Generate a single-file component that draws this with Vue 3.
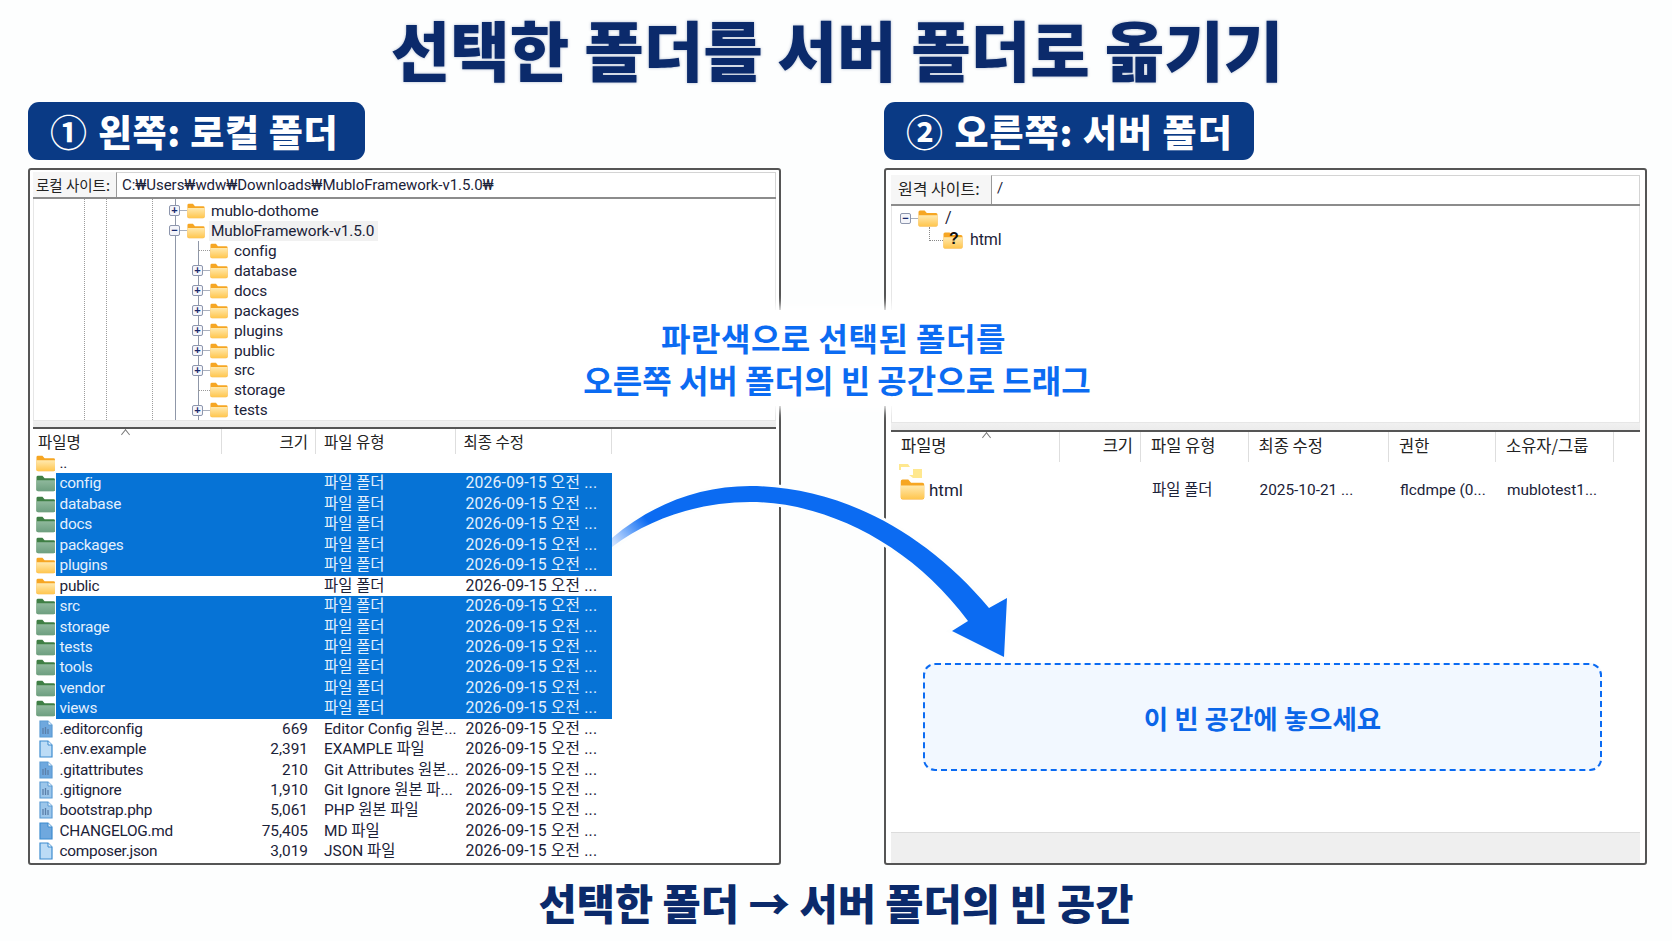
<template>
  <div class="page">
    <svg class="defs" width="0" height="0" aria-hidden="true">
      <defs>
        <linearGradient id="folder-face" x1="0" y1="0" x2="0" y2="1">
          <stop offset="0" stop-color="#ffe9ae" />
          <stop offset="1" stop-color="#ffc64f" />
        </linearGradient>
        <linearGradient id="folder-green-face" x1="0" y1="0" x2="0" y2="1">
          <stop offset="0" stop-color="#8fb89c" />
          <stop offset="1" stop-color="#6e9f80" />
        </linearGradient>
        <linearGradient id="arrow-fill" gradientUnits="userSpaceOnUse" x1="0" y1="62" x2="32" y2="36">
          <stop offset="0" stop-color="#cfe2ff" />
          <stop offset="1" stop-color="#0b6bf2" />
        </linearGradient>
        <symbol id="folder" viewBox="0 0 20 17">
          <path d="M0.5 15V2a1.5 1.5 0 0 1 1.5-1.5h4.6l2.2 2.6H18a1.5 1.5 0 0 1 1.5 1.5V15a1.5 1.5 0 0 1-1.5 1.5H2A1.5 1.5 0 0 1 .5 15Z" fill="#f6a623" />
          <path d="M0.5 5.2h19V15a1.2 1.2 0 0 1-1.2 1.2H1.7A1.2 1.2 0 0 1 .5 15Z" fill="url(#folder-face)" />
        </symbol>
        <symbol id="folder-green" viewBox="0 0 20 17">
          <path d="M0.5 15V2a1.5 1.5 0 0 1 1.5-1.5h4.6l2.2 2.6H18a1.5 1.5 0 0 1 1.5 1.5V15a1.5 1.5 0 0 1-1.5 1.5H2A1.5 1.5 0 0 1 .5 15Z" fill="#3f7f45" />
          <path d="M0.5 5.2h19V15a1.2 1.2 0 0 1-1.2 1.2H1.7A1.2 1.2 0 0 1 .5 15Z" fill="url(#folder-green-face)" />
        </symbol>
        <symbol id="doc" viewBox="0 0 14 18">
          <path d="M1 1h8l4 4v12H1Z" fill="currentColor" stroke="#3d8ccf" stroke-width="1.2" />
          <path d="M9 1v4h4" fill="#eaf4fd" stroke="#3d8ccf" stroke-width="1" />
        </symbol>
        <symbol id="doc-lines" viewBox="0 0 14 18">
          <path d="M1 1h8l4 4v12H1Z" fill="currentColor" stroke="#5a9bd4" stroke-width="1.2" />
          <path d="M9 1v4h4" fill="#eaf4fd" stroke="#5a9bd4" stroke-width="1" />
          <path d="M4 8v6M6.5 7v7M9 9v5" stroke="#5b7fa8" stroke-width="1.3" fill="none" />
        </symbol>
      </defs>
    </svg>

    <h1 class="title">선택한 폴더를 서버 폴더로 옮기기</h1>

    <div class="columns">
      <div class="badge badge-left"><span class="num">①</span> 왼쪽: 로컬 폴더</div>
      <div class="badge badge-right"><span class="num">②</span> 오른쪽: 서버 폴더</div>

      <!-- 왼쪽 패널 -->
      <section class="panel panel-left">
        <div class="site-bar">
          <span class="site-label">로컬 사이트:</span>
          <div class="site-input">C:₩Users₩wdw₩Downloads₩MubloFramework-v1.5.0₩</div>
        </div>
        <div class="tree tree-left">
          <div v-for="node in localTree" :key="node.name" class="tree-row" :class="'lvl-' + node.level">
            <span class="slot">
              <span v-if="node.mark" class="expander">{{ node.mark }}</span>
              <span v-if="node.mark" class="dash"></span>
              <span v-else class="dash-only"></span>
            </span>
            <svg class="tree-folder"><use href="#folder" /></svg>
            <span class="tree-name" :class="{ current: node.current }">{{ node.name }}</span>
          </div>
          <div class="tree-row lvl-2 clipped">
            <span class="slot"></span>
            <svg class="tree-folder"><use href="#folder" /></svg>
          </div>
        </div>
        <div class="split"></div>
        <div class="list-head cols-left">
          <span class="caret caret-left"></span>
          <span>파일명</span>
          <span class="right">크기</span>
          <span>파일 유형</span>
          <span>최종 수정</span>
        </div>
        <div class="rows">
          <div v-for="row in localRows" :key="row.name" class="row">
            <svg class="row-icon" :class="row.icon"><use :href="'#' + iconOf(row)" /></svg>
            <div class="row-body cols-body" :class="{ selected: row.selected }">
              <span class="cell-name">{{ row.name }}</span>
              <span class="right">{{ row.size }}</span>
              <span>{{ row.type }}</span>
              <span class="cell-date">{{ row.date }}</span>
            </div>
          </div>
        </div>
      </section>

      <!-- 오른쪽 패널 -->
      <section class="panel panel-right">
        <div class="site-bar">
          <span class="site-label">원격 사이트:</span>
          <div class="site-input">/</div>
        </div>
        <div class="tree tree-right">
          <div class="tree-row root-row">
            <span class="slot">
              <span class="expander">−</span>
              <span class="dash"></span>
            </span>
            <svg class="tree-folder"><use href="#folder" /></svg>
            <span class="tree-name">/</span>
          </div>
          <div class="tree-row html-row">
            <span class="elbow"></span>
            <span class="unknown">
              <svg class="tree-folder"><use href="#folder" /></svg>
              <b>?</b>
            </span>
            <span class="tree-name">html</span>
          </div>
        </div>
        <div class="split"></div>
        <div class="list-head cols-right">
          <span class="caret caret-right"></span>
          <span>파일명</span>
          <span class="right">크기</span>
          <span>파일 유형</span>
          <span>최종 수정</span>
          <span>권한</span>
          <span>소유자/그룹</span>
        </div>
        <div class="remote-rows">
          <svg class="ghost" viewBox="0 0 24 14">
            <path d="M0 0h9l2 3h-9v3H0Z" fill="#ffe88f" />
            <path d="M14 5h9v9h-9l-4-3h4Z" fill="#ffe88f" />
          </svg>
          <div class="remote-row cols-right">
            <span class="remote-name">
              <svg class="remote-folder"><use href="#folder" /></svg>
              html
            </span>
            <span></span>
            <span>파일 폴더</span>
            <span>2025-10-21 ...</span>
            <span>flcdmpe (0...</span>
            <span>mublotest1...</span>
          </div>
        </div>
        <div class="status"></div>
      </section>
    </div>

    <p class="footer">선택한 폴더 → 서버 폴더의 빈 공간</p>

    <div class="note">
      <span class="note-first">파란색으로 선택된 폴더를</span><br />오른쪽 서버 폴더의 빈 공간으로 드래그
    </div>

    <div class="drop-zone">이 빈 공간에 놓으세요</div>

    <svg class="arrow" width="400" height="180" viewBox="0 0 400 180">
      <path class="arrow-halo" :d="arrowPath" />
      <path class="arrow-shape" :d="arrowPath" fill="url(#arrow-fill)" />
    </svg>
  </div>
</template>

<script setup>
const date = '2026-09-15 오전 ...'
const folderType = '파일 폴더'

const localTree = [
  { name: 'mublo-dothome', level: 1, mark: '+' },
  { name: 'MubloFramework-v1.5.0', level: 1, mark: '−', current: true },
  { name: 'config', level: 2 },
  { name: 'database', level: 2, mark: '+' },
  { name: 'docs', level: 2, mark: '+' },
  { name: 'packages', level: 2, mark: '+' },
  { name: 'plugins', level: 2, mark: '+' },
  { name: 'public', level: 2, mark: '+' },
  { name: 'src', level: 2, mark: '+' },
  { name: 'storage', level: 2 },
  { name: 'tests', level: 2, mark: '+' },
]

const sel = (name, folder = 'folder-green') => ({
  name,
  size: '',
  type: folderType,
  date,
  selected: true,
  folder,
})

const file = (name, size, type, symbol, icon) => ({ name, size, type, date, symbol, icon })

const localRows = [
  { name: '..', size: '', type: '', date: '', folder: 'folder' },
  sel('config'),
  sel('database'),
  sel('docs'),
  sel('packages'),
  sel('plugins', 'folder'),
  { name: 'public', size: '', type: folderType, date, folder: 'folder' },
  sel('src'),
  sel('storage'),
  sel('tests'),
  sel('tools'),
  sel('vendor'),
  sel('views'),
  file('.editorconfig', '669', 'Editor Config 원본...', 'doc-lines', 'doc-mid'),
  file('.env.example', '2,391', 'EXAMPLE 파일', 'doc', 'doc-light'),
  file('.gitattributes', '210', 'Git Attributes 원본...', 'doc-lines', 'doc-mid'),
  file('.gitignore', '1,910', 'Git Ignore 원본 파...', 'doc-lines', 'doc-soft'),
  file('bootstrap.php', '5,061', 'PHP 원본 파일', 'doc-lines', 'doc-soft'),
  file('CHANGELOG.md', '75,405', 'MD 파일', 'doc', 'doc-mid'),
  file('composer.json', '3,019', 'JSON 파일', 'doc', 'doc-light'),
]

const iconOf = (row) => row.symbol || row.folder

const arrowPath =
  'M0 58 C40 24 88 6 138 6 C225 6 312 50 377 128 L395 118 L392 177 L340 151 L356 141 ' +
  'C300 65 215 22 138 22 C88 22 38 38 0 67 Z'
</script>

<style>
html,
body {
  margin: 0;
  background: #fdfefe;
}
</style>

<style scoped>
.page {
  position: relative;
  width: 1672px;
  height: 941px;
  overflow: hidden;
  background: #fdfefe;
  font-family: Roboto, "Noto Sans CJK KR", sans-serif;
  color: #1b2238;
}
.defs {
  position: absolute;
}
.title {
  margin: 0;
  height: 96px;
  padding-bottom: 6px;
  padding-left: 2px;
  box-sizing: content-box;
  display: flex;
  align-items: center;
  justify-content: center;
  font-family: "Noto Sans CJK KR", sans-serif;
  font-size: 64.7px;
  font-weight: 900;
  color: #0b2a6b;
  text-shadow: 0 0 3px rgba(11, 42, 107, 0.35);
}
.columns {
  display: grid;
  grid-template-columns: 753px 763px;
  grid-template-rows: 58px 697px;
  column-gap: 103px;
  row-gap: 8px;
  padding-left: 28px;
}
.badge {
  background: #0a3a85;
  border-radius: 11px;
  color: #fff;
  font-family: "Noto Sans CJK KR", sans-serif;
  font-size: 37px;
  font-weight: 900;
  display: flex;
  align-items: center;
  white-space: pre;
}
.badge-left {
  width: 337px;
  padding-left: 22px;
  box-sizing: border-box;
  letter-spacing: 0.7px;
}
.badge-right {
  width: 370px;
  padding-left: 22px;
  box-sizing: border-box;
  letter-spacing: 1px;
}
.num {
  font-weight: 700;
  margin-right: 1px;
}

.panel {
  position: relative;
  border: 2px solid #555;
  border-radius: 3px;
  box-sizing: border-box;
  display: flex;
  flex-direction: column;
  background: #fff;
}
.panel-left {
  padding: 2px 3px 0;
}
.panel-right {
  padding: 2px 5px 0;
}
.site-bar {
  display: flex;
  border-bottom: 2px solid #8c8c8c;
  flex: none;
  box-sizing: border-box;
}
.panel-left .site-bar {
  height: 27px;
}
.panel-right .site-bar {
  height: 31px;
  margin-top: 3px;
}
.site-label {
  font-family: "Noto Sans CJK KR", sans-serif;
  font-size: 14.5px;
  line-height: 25px;
  padding-left: 3px;
  color: #222;
  background: #f6f6f6;
}
.panel-left .site-label {
  width: 80px;
}
.panel-right .site-label {
  width: 100px;
  font-size: 16px;
  line-height: 27px;
  padding-left: 7px;
  box-sizing: border-box;
}
.site-input {
  flex: 1;
  border: 1px solid #d4d4d4;
  border-left: 1px solid #9a9a9a;
  border-bottom: 0;
  padding-left: 5px;
  font-size: 15px;
  letter-spacing: -0.05px;
  line-height: 24px;
  color: #1b2238;
}

.tree {
  flex: none;
  overflow: hidden;
  box-sizing: border-box;
  border: 1px solid #e6e6e6;
  border-top: 0;
  font-size: 15.4px;
}
.tree-left {
  height: 222px;
  padding-top: 2px;
  background-image:
    repeating-linear-gradient(#9c9c9c 0 1px, transparent 1px 2px),
    repeating-linear-gradient(#9c9c9c 0 1px, transparent 1px 2px),
    repeating-linear-gradient(#9c9c9c 0 1px, transparent 1px 2px),
    linear-gradient(#8f97a8, #8f97a8),
    linear-gradient(#8f97a8, #8f97a8);
  background-repeat: no-repeat;
  background-position: 50px 0, 72px 0, 118px 0, 141px 0, 164px 42px;
  background-size: 1px 100%;
}
.tree-right {
  height: 217px;
  padding-top: 1px;
  position: relative;
}
.tree-row {
  display: flex;
  align-items: center;
  height: 19.95px;
  white-space: nowrap;
}
.lvl-1 {
  padding-left: 135px;
}
.lvl-2 {
  padding-left: 158px;
}
.slot {
  flex: none;
  width: 18px;
  display: flex;
  align-items: center;
}
.expander {
  flex: none;
  box-sizing: border-box;
  width: 11px;
  height: 11px;
  border: 1px solid #8d96ad;
  border-radius: 2px;
  background: #f4f5fa;
  color: #1a2a6c;
  font-family: "Liberation Sans", sans-serif;
  font-size: 11px;
  font-weight: 700;
  line-height: 9px;
  text-align: center;
}
.dash {
  flex: 1;
  border-top: 1px solid #aab0bd;
}
.dash-only {
  margin-left: 6px;
  flex: 1;
  border-top: 1px dotted #999;
}
.tree-folder {
  flex: none;
  width: 18px;
  height: 16px;
}
.tree-name {
  margin-left: 4px;
  padding: 0 4px 0 2px;
  line-height: 20px;
  letter-spacing: -0.1px;
}
.tree-name.current {
  background: #f1f1f1;
}
.clipped {
  margin-top: 5px;
}

.root-row {
  height: 22px;
  padding-left: 8px;
  font-size: 16px;
}
.root-row .tree-folder {
  width: 20px;
  height: 17px;
}
.root-row .tree-name {
  margin-left: 5px;
}
.html-row {
  height: 22px;
  padding-left: 37px;
  font-size: 16px;
}
.elbow {
  width: 14px;
  height: 14px;
  margin-top: -12px;
  box-sizing: border-box;
  border-left: 1px dotted #888;
  border-bottom: 1px dotted #888;
}
.unknown {
  position: relative;
  width: 20px;
  height: 17px;
}
.unknown .tree-folder {
  width: 20px;
  height: 17px;
}
.unknown b {
  position: absolute;
  left: 6px;
  top: -2px;
  font-family: "Liberation Sans", sans-serif;
  font-size: 16px;
  color: #111;
}
.html-row .tree-name {
  margin-left: 5px;
}

.split {
  flex: none;
  background: linear-gradient(#f0f0f0, #ececec);
  border-bottom: 2px solid #555;
  box-sizing: border-box;
}
.panel-left .split {
  height: 8px;
}
.panel-right .split {
  height: 9px;
}

.cols-left {
  display: grid;
  grid-template-columns: 189px 94px 139.5px 156.5px;
}
.cols-body {
  display: grid;
  grid-template-columns: 166.5px 94px 139.5px 156.5px;
}
.cols-right {
  display: grid;
  grid-template-columns: 169px 81px 107.5px 140.5px 107px 118px;
}
.list-head {
  position: relative;
  flex: none;
  font-family: "Noto Sans CJK KR", sans-serif;
  font-size: 15.5px;
  color: #222;
}
.panel-left .list-head {
  height: 24px;
  line-height: 25px;
}
.panel-right .list-head {
  height: 30px;
  line-height: 27px;
  font-size: 16.5px;
}
.list-head > span:not(.caret) {
  border-right: 1px solid #dedede;
  padding-left: 8px;
  box-sizing: border-box;
  height: 100%;
}
.panel-left .list-head > span:nth-child(2) {
  padding-left: 5px;
}
.panel-right .list-head > span:not(.caret) {
  padding-left: 10px;
}
.list-head > .right,
.panel-right .list-head > .right {
  text-align: right;
  padding: 0 7px 0 0;
}
.caret {
  position: absolute;
  top: 2px;
  width: 6px;
  height: 6px;
  border-left: 1px solid #777;
  border-top: 1px solid #777;
  transform: rotate(45deg) skew(6deg, 6deg);
}
.caret-left {
  left: 89px;
}
.caret-right {
  left: 92px;
}

.rows {
  flex: 1;
  font-size: 15.4px;
}
.row {
  display: flex;
  height: 20.45px;
  line-height: 20.45px;
  padding-left: 3px;
  white-space: nowrap;
}
.row-icon {
  flex: none;
  width: 19.5px;
  height: 17px;
  margin-top: 2px;
}
.row-icon.doc-mid,
.row-icon.doc-light,
.row-icon.doc-soft {
  width: 14px;
  height: 18px;
  margin: 1px 2.5px 0 3px;
}
.doc-mid {
  color: #6fa8de;
}
.doc-light {
  color: #bcdcf6;
}
.doc-soft {
  color: #9cc6ea;
}
.row-body {
  flex: none;
}
.row-body.selected {
  background: #0673d6;
  color: #e4f0fd;
}
.row-body > span:nth-child(3) {
  padding-left: 8px;
}
.row-body > .cell-date {
  padding-left: 10px;
  font-size: 15.8px;
  letter-spacing: 0.15px;
}
.cell-name {
  padding-left: 4px;
  letter-spacing: -0.25px;
}
.right {
  text-align: right;
  padding-right: 8px;
}

.remote-rows {
  position: relative;
  flex: none;
  height: 60px;
}
.ghost {
  position: absolute;
  left: 8px;
  top: 2px;
  width: 24px;
  height: 14px;
}
.remote-row {
  padding-top: 17px;
  line-height: 20px;
  font-size: 15.4px;
  white-space: nowrap;
}
.remote-row > span:not(.remote-name) {
  padding-left: 11px;
  padding-top: 1px;
}
.remote-name {
  display: flex;
  align-items: center;
  padding-left: 9px;
  gap: 4px;
  font-size: 17px;
}
.remote-folder {
  width: 25px;
  height: 21px;
}
.status {
  margin: auto 0 0;
  height: 30px;
  background: #efefef;
  border-top: 1px solid #dcdcdc;
}

.footer {
  margin: 0;
  height: 73px;
  display: flex;
  align-items: center;
  justify-content: center;
  font-family: "Noto Sans CJK KR", sans-serif;
  font-size: 41.5px;
  font-weight: 900;
  color: #0b2a6b;
}

.note {
  position: absolute;
  left: 567px;
  top: 310px;
  width: 540px;
  height: 96px;
  background: #fff;
  box-shadow: 0 0 10px 4px #fff;
  font-family: "Noto Sans CJK KR", sans-serif;
  font-size: 32px;
  font-weight: 700;
  line-height: 42px;
  color: #0b6bf2;
  text-align: center;
  padding-top: 6px;
  box-sizing: border-box;
}
.note-first {
  letter-spacing: 0.5px;
  margin-right: 7px;
}
.drop-zone {
  position: absolute;
  left: 923px;
  top: 663px;
  width: 679px;
  height: 108px;
  box-sizing: border-box;
  border: 2px dashed #0b6bf2;
  border-radius: 12px;
  background: #f2f8ff;
  display: flex;
  align-items: center;
  justify-content: center;
  font-family: "Noto Sans CJK KR", sans-serif;
  font-size: 26.5px;
  font-weight: 700;
  color: #0b66e8;
}
.arrow {
  position: absolute;
  left: 612px;
  top: 480px;
}
.arrow-halo {
  fill: none;
  stroke: #fdfefe;
  stroke-width: 6;
}
</style>
